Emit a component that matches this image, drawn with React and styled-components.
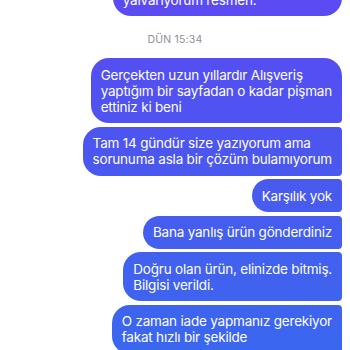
import React from 'react'
import styled, { createGlobalStyle } from 'styled-components'

const GlobalStyle = createGlobalStyle`
  html, body {
    margin: 0;
    padding: 0;
    background: #ffffff;
    overflow: hidden;
  }
  body {
    font-family: Inter, "Noto Sans", "Liberation Sans", sans-serif;
  }
`

const Thread = styled.div`
  width: 350px;
  height: 350px;
  overflow: hidden;
  box-sizing: border-box;
  padding: 0 8px;
  display: flex;
  flex-direction: column;
  align-items: flex-end;
`

const Scroller = styled.div`
  display: flex;
  flex-direction: column;
  align-items: flex-end;
  width: 100%;
  margin-top: -33px;
`

const Group = styled.div`
  display: flex;
  flex-direction: column;
  align-items: flex-end;
  gap: 3.5px;
  width: 100%;
`

const Stamp = styled.div`
  align-self: center;
  margin: 17px 0 11px;
  font-size: 10.5px;
  line-height: 14px;
  letter-spacing: 0.2px;
  color: #8e8e93;
`

const Bubble = styled.div`
  box-sizing: border-box;
  padding: 8.5px 10px;
  font-size: 13.5px;
  line-height: 16px;
  letter-spacing: -0.2px;
  color: #ffffff;
  white-space: nowrap;
  background: linear-gradient(180deg, #5c4af3 0px, #5250f2 80px, #4b57ef 160px, #4360ef 250px, #3a67ef 350px) fixed;
  border-radius: 18px;
  border-top-right-radius: ${p => (p.first ? '18px' : '4px')};
  border-bottom-right-radius: ${p => (p.last ? '18px' : '4px')};
`

const earlier = [['Lütfen bu sorunu çözün, size artık', 'yalvarıyorum resmen.']]

const today = [
  ['Gerçekten uzun yıllardır Alışveriş', 'yaptığım bir sayfadan o kadar pişman', 'ettiniz ki beni'],
  ['Tam 14 gündür size yazıyorum ama', 'sorunuma asla bir çözüm bulamıyorum'],
  ['Karşılık yok'],
  ['Bana yanlış ürün gönderdiniz'],
  ['Doğru olan ürün, elinizde bitmiş.', 'Bilgisi verildi.'],
  ['O zaman iade yapmanız gerekiyor', 'fakat hızlı bir şekilde']
]

const renderGroup = (messages, closed) =>
  messages.map((lines, i) => (
    <Bubble key={i} first={i === 0} last={closed && i === messages.length - 1}>
      {lines.map((line, j) => (
        <React.Fragment key={j}>
          {j > 0 && <br />}
          {line}
        </React.Fragment>
      ))}
    </Bubble>
  ))

export default function App () {
  return (
    <>
      <GlobalStyle />
      <Thread>
        <Scroller>
          <Group>{renderGroup(earlier, true)}</Group>
          <Stamp>DÜN 15:34</Stamp>
          <Group>{renderGroup(today, false)}</Group>
        </Scroller>
      </Thread>
    </>
  )
}
